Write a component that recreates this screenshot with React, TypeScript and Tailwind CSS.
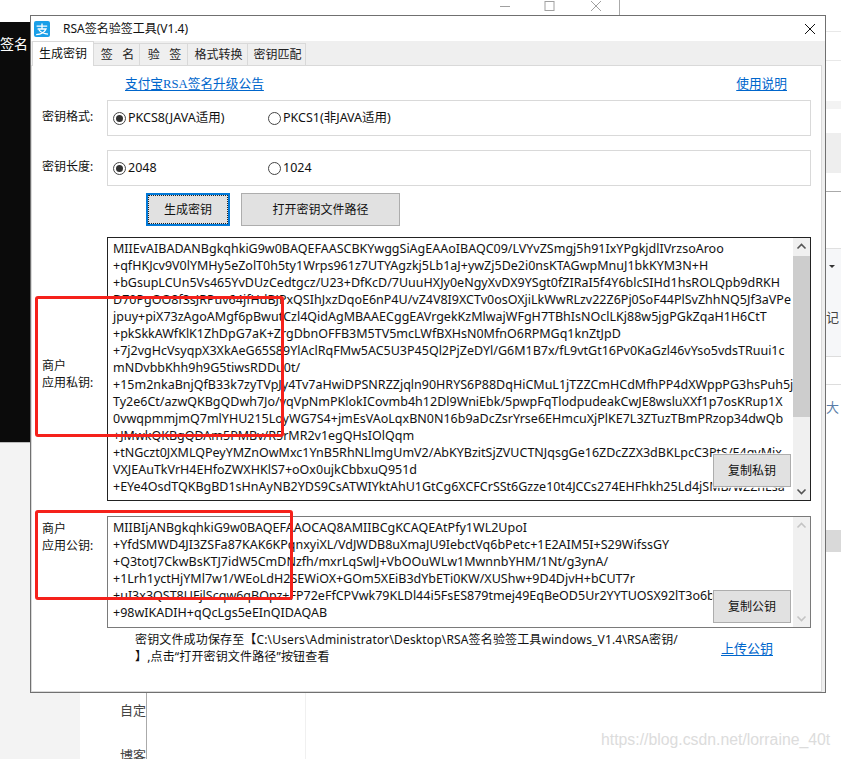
const privateKey = [
  "MIIEvAIBADANBgkqhkiG9w0BAQEFAASCBKYwggSiAgEAAoIBAQC09/LVYvZSmgj5h91IxYPgkjdlIVrzsoAroo",
  "+qfHKJcv9V0lYMHy5eZolT0h5ty1Wrps961z7UTYAgzkj5Lb1aJ+ywZj5De2i0nsKTAGwpMnuJ1bkKYM3N+H",
  "+bGsupLCUn5Vs465YvDUzCedtgcz/U23+DfKcD/7UuuHXJy0eNgyXvDX9YSgt0fZIRaI5f4Y6blcSIHd1hsROLQpb9dRKH",
  "D70PgOO8f3sJRPuv64jfHdBJPxQSIhJxzDqoE6nP4U/vZ4V8I9XCTv0osOXjiLkWwRLzv22Z6Pj0SoF44PlSvZhhNQ5Jf3aVPe",
  "jpuy+piX73zAgoAMgf6pBwutCzl4QidAgMBAAECggEAVrgekKzMlwajWFgH7TBhIsNOclLKj88w5jgPGkZqaH1H6CtT",
  "+pkSkkAWfKlK1ZhDpG7aK+ZrgDbnOFFB3M5TV5mcLWfBXHsN0MfnO6RPMGq1knZtJpD",
  "+7j2vgHcVsyqpX3XkAeG65S89YlAclRqFMw5AC5U3P45Ql2PjZeDYl/G6M1B7x/fL9vtGt16Pv0KaGzl46vYso5vdsTRuui1c",
  "mNDvbbKhh9h9G5tiwsRDDu0t/",
  "+15m2nkaBnjQfB33k7zyTVpJy4Tv7aHwiDPSNRZZjqln90HRYS6P88DqHiCMuL1jTZZCmHCdMfhPP4dXWppPG3hsPuh5j",
  "Ty2e6Ct/azwQKBgQDwh7Jo/vqVpNmPKlokICovmb4h12Dl9WniEbk/5pwpFqTlodpudeakCwJE8wsluXXf1p7osKRup1X",
  "0vwqpmmjmQ7mlYHU215LoyWG7S4+jmEsVAoLqxBN0N16b9aDcZsrYrse6EHmcuXjPlKE7L3ZTuzTBmPRzop34dwQb",
  "+JMwkQKBgQDAm5PMBv/R5rMR2v1egQHsIOlQqm",
  "+tNGczt0JXMLQPeyYMZnOwMxc1YnB5RhNLlmgUmV2/AbKYBzitSjZVUCTNJqsgGe16ZDcZZX3dBKLpcC3PtS/E4qvMix",
  "VXJEAuTkVrH4EHfoZWXHKlS7+oOx0ujkCbbxuQ951d",
  "+EYe4OsdTQKBgBD1sHnAyNB2YDS9CsATWIYktAhU1GtCg6XCFCrSSt6Gzze10t4JCCs274EHFhkh25Ld4jSMB/wZZnLsa",
];

const publicKey = [
  "MIIBIjANBgkqhkiG9w0BAQEFAAOCAQ8AMIIBCgKCAQEAtPfy1WL2UpoI",
  "+YfdSMWD4JI3ZSFa87KAK6KPqnxyiXL/VdJWDB8uXmaJU9IebctVq6bPetc+1E2AIM5I+S29WifssGY",
  "+Q3totJ7CkwBsKTJ7idW5CmDNzfh/mxrLqSwlJ+VbOOuWLw1MwnnbYHM/1Nt/g3ynA/",
  "+1Lrh1yctHjYMl7w1/WEoLdH2SEWiOX+GOm5XEiB3dYbETi0KW/XUShw+9D4DjvH+bCUT7r",
  "+uI3x3QST8UFjlScqw6qBOpz+FP72eFfCPVwk79KLDl44i5FsES879tmej49EqBeOD5Ur2YYTUOSX92lT3o6bs",
  "+98wIKADIH+qQcLgs5eEInQIDAQAB",
];

const tabs = [
  { label: "签   名", width: "w-[46px]" },
  { label: "验   签", width: "w-[48px]" },
  { label: "格式转换", width: "w-[60px]" },
  { label: "密钥匹配", width: "w-[58px]" },
];

const ui = "font-['Noto_Sans','Noto_Sans_CJK_SC',sans-serif]";
const cjk = "font-['Noto_Sans_CJK_SC',sans-serif]";

function Radio({ checked, label, width }: { checked?: boolean; label: string; width: string }) {
  return (
    <label className={`flex items-center gap-[2px] text-[12.5px] text-[#111] ${width}`}>
      <span className="flex h-[13px] w-[13px] items-center justify-center rounded-full border border-[#444] bg-white">
        {checked && <span className="h-[7px] w-[7px] rounded-full bg-[#333]" />}
      </span>
      {label}
    </label>
  );
}

function OptionRow({ title, children }: { title: string; children: React.ReactNode }) {
  return (
    <div className="flex h-9 items-start pr-[10px]">
      <span className="w-[75px] pl-[10px] pt-[8px] text-xs leading-[17px] text-[#111]">{title}</span>
      <div className="flex h-9 min-w-0 flex-1 items-center border border-[#d9d9d9] pl-[5px] pt-px">{children}</div>
    </div>
  );
}

function GrayButton({ label, className }: { label: string; className: string }) {
  return (
    <button className={`flex items-center justify-center border border-[#adadad] bg-[#e1e1e1] text-xs text-[#111] ${className}`}>
      {label}
    </button>
  );
}

function ScrollBar({ disabled, children }: { disabled?: boolean; children?: React.ReactNode }) {
  const color = disabled ? "#c4c4c4" : "#555";
  return (
    <div className="flex w-[17px] shrink-0 flex-col bg-[#f0f0f0]">
      <svg viewBox="0 0 17 17" className="h-[17px] w-[17px] shrink-0">
        <path d="M4.5 10.5 8.5 6.5 12.5 10.5" fill="none" stroke={color} strokeWidth="1.6" />
      </svg>
      <div className="flex-1">{children}</div>
      <svg viewBox="0 0 17 17" className="h-[17px] w-[17px] shrink-0">
        <path d="M4.5 6.5 8.5 10.5 12.5 6.5" fill="none" stroke={color} strokeWidth="1.6" />
      </svg>
    </div>
  );
}

function KeyBlock({
  title,
  lines,
  button,
  boxClass,
  titleClass,
  buttonClass,
  disabled,
}: {
  title: string;
  lines: string[];
  button: string;
  boxClass: string;
  titleClass: string;
  buttonClass: string;
  disabled?: boolean;
}) {
  return (
    <div className="flex items-start pr-[10px]">
      <div className={`w-[75px] shrink-0 pl-[10px] text-xs leading-[17px] text-[#111] ${titleClass}`}>
        商户
        <br />
        {title}
      </div>
      <div className={`relative flex min-w-0 flex-1 overflow-hidden border ${boxClass}`}>
        <div className="min-w-0 flex-1 overflow-hidden whitespace-pre pl-[5px] pt-[2px] text-[12.5px] leading-[17px] text-[#111]">
          {lines.map((line) => (
            <div key={line}>{line}</div>
          ))}
        </div>
        <ScrollBar disabled={disabled}>
          {!disabled && <div className="mt-px h-[161px] bg-[#cdcdcd]" />}
        </ScrollBar>
        <GrayButton label={button} className={`absolute right-[19px] h-[33px] w-[78px] ring-1 ring-white/80 ${buttonClass}`} />
      </div>
    </div>
  );
}

export default function App() {
  return (
    <div className={`relative h-[759px] w-[841px] overflow-hidden bg-white ${cjk}`}>
      {/* window behind the dialog */}
      <div className="absolute left-0 top-[22px] h-[420px] w-[30px] bg-[#0b0b0b]">
        <span className="absolute left-0 top-[11px] whitespace-nowrap text-[14px] leading-5 text-white">签名</span>
      </div>
      <div className="absolute bottom-0 left-0 top-[442px] w-[30px] border-t border-[#bbb] bg-[#f3f3f3]" />
      <div className="absolute bottom-0 left-[30px] top-[692px] w-[50px] bg-[#f3f3f3]" />
      <div className="absolute bottom-0 left-[146px] top-[692px] w-px bg-[#aaa]" />
      <div className="absolute bottom-0 left-[305px] top-[692px] w-px bg-[#f0f0f0]" />
      <div className="absolute left-[120px] top-[700px] whitespace-nowrap text-[13px] leading-5 text-[#444]">自定</div>
      <div className="absolute left-[120px] top-[739px] h-[20px] whitespace-nowrap pt-[6px] text-[13px] leading-5 text-[#444]">博客</div>

      <svg viewBox="0 0 120 14" className="absolute left-[497px] top-0 h-[14px] w-[120px]">
        <path d="M3 6.5H13" stroke="#a0a0a0" strokeWidth="1" />
        <rect x="48" y="1.5" width="9" height="9" fill="none" stroke="#a0a0a0" />
        <path d="M94 1 104 11M104 1 94 11" stroke="#a0a0a0" strokeWidth="1" />
      </svg>
      <div className="absolute left-[619px] top-0 h-[15px] w-px bg-[#aaa]" />

      <div className="absolute left-[826px] top-[31px] h-px w-[15px] bg-[#e8e8e8]" />
      <div className="absolute left-[826px] top-[60px] h-px w-[15px] bg-[#e8e8e8]" />
      <div className="absolute left-[826px] top-[101px] h-[8px] w-[15px] bg-[#f3f3f3]" />
      <div className="absolute left-[826px] top-[133px] h-[40px] w-[15px] bg-[#eeeeee]" />
      <div className="absolute left-[826px] top-[191px] h-px w-[15px] bg-[#aaa]" />
      <div className="absolute left-[826px] top-[248px] h-[108px] w-[15px] overflow-hidden border-t border-[#e0e0e0] bg-[#f6f7f9]">
        <span className="absolute left-[3px] top-[16px] h-0 w-0 border-x-[3px] border-t-[3px] border-x-transparent border-t-[#333]" />
        <span className="absolute left-0 top-[58px] whitespace-nowrap text-[13px] leading-5 text-[#444]">记</span>
      </div>
      <div className="absolute left-[826px] top-[356px] h-px w-[15px] bg-[#ddd]" />
      <div className="absolute left-[826px] top-[384px] h-px w-[15px] bg-[#ddd]" />
      <span className="absolute left-[826px] top-[397px] whitespace-nowrap text-[13px] leading-5 text-[#5a7da8]">大</span>
      <div className="absolute left-[826px] top-[530px] h-[22px] w-[15px] bg-[#d9d9d9]" />

      {/* dialog */}
      <div className={`absolute left-[30px] top-[15px] flex h-[678px] w-[796px] flex-col border border-[#707070] bg-white ${ui}`}>
        <div className="flex h-[25px] shrink-0 items-center pl-[3px] pr-[9px]">
          <svg viewBox="0 0 16 16" className="h-4 w-4 shrink-0">
            <rect width="16" height="16" rx="2" fill="#1a9fe8" />
            <path d="M2.6 5.2H13.2M8 2.6V8M3.6 8H12C10.6 11.2 7.4 13.2 2.2 13.7M5 9.2C7 11.6 10 12.8 14 13.2" fill="none" stroke="#fff" strokeWidth="1.3" />
          </svg>
          <span className="ml-[13px] flex-1 pt-px text-xs text-[#111]">RSA签名验签工具(V1.4)</span>
          <svg viewBox="0 0 12 12" className="h-3 w-3">
            <path d="M1 1 11 11M11 1 1 11" stroke="#111" strokeWidth="1" />
          </svg>
        </div>

        <div className="relative z-10 flex h-[24px] shrink-0 items-end bg-[#efefef] pl-px">
          <div className="relative top-px flex h-[25px] w-[62px] items-center justify-center border-x border-t border-[#d9d9d9] bg-white text-xs text-[#111]">
            生成密钥
          </div>
          {tabs.map((tab) => (
            <div
              key={tab.label}
              className={`flex h-[22px] items-center justify-center whitespace-pre border-r border-t border-[#d9d9d9] pl-[2px] text-xs text-[#222] ${tab.width}`}
            >
              {tab.label}
            </div>
          ))}
        </div>

        <div className="flex min-h-0 flex-1 bg-[#efefef] pr-[3px]">
          <div className="flex min-w-0 flex-1 flex-col border border-[#d9d9d9] bg-white">
            <div className="flex h-[34px] shrink-0 items-start pl-[93px] pr-[34px] pt-[7px] text-[12.7px] leading-[20px] text-[#0066cc]">
              <a className="flex-1 underline underline-offset-2">
                <span className="font-['Liberation_Serif','Noto_Sans_CJK_SC',serif]">支付宝RSA签名升级公告</span>
              </a>
              <a className="underline underline-offset-2">使用说明</a>
            </div>

            <OptionRow title="密钥格式:">
              <Radio checked label="PKCS8(JAVA适用)" width="w-[155px]" />
              <Radio label="PKCS1(非JAVA适用)" width="w-[180px]" />
            </OptionRow>

            <div className="mt-[14px]">
              <OptionRow title="密钥长度:">
                <Radio checked label="2048" width="w-[155px]" />
                <Radio label="1024" width="w-[100px]" />
              </OptionRow>
            </div>

            <div className="mt-[7px] flex h-[33px] shrink-0 gap-[11px] pl-[114px]">
              <button className="flex w-[84px] items-center justify-center border-2 border-[#0078d7] bg-[#e1e1e1] text-xs text-[#111] outline-1 -outline-offset-3 outline-dotted outline-[#222]">
                生成密钥
              </button>
              <GrayButton label="打开密钥文件路径" className="w-[159px]" />
            </div>

            <div className="mt-[11px]">
              <KeyBlock
                title="应用私钥:"
                lines={privateKey}
                button="复制私钥"
                boxClass="h-[264px] border-[#222]"
                titleClass="pt-[120px]"
                buttonClass="bottom-[13px]"
              />
            </div>

            <div className="mt-[15px]">
              <KeyBlock
                title="应用公钥:"
                lines={publicKey}
                button="复制公钥"
                boxClass="h-[112px] border-[#7a7a7a]"
                titleClass="pt-[4px]"
                buttonClass="bottom-[4px]"
                disabled
              />
            </div>

            <div className="mt-[3px] flex pl-[103px] pr-[48px]">
              <p className="w-[586px] text-xs leading-[17px] tracking-[0.15px] text-[#111]">
                密钥文件成功保存至【C:\Users\Administrator\Desktop\RSA签名验签工具windows_V1.4\RSA密钥/
                <br />】,点击“打开密钥文件路径”按钮查看
              </p>
              <a className="pt-[9px] text-[13px] leading-[17px] text-[#0066cc] underline underline-offset-2">上传公钥</a>
            </div>
          </div>
        </div>
      </div>

      {/* annotations */}
      <div className="absolute left-[35px] top-[296px] h-[141px] w-[249px] rounded-[3px] border-[3px] border-[#f5211b]" />
      <div className="absolute left-[35px] top-[510px] h-[90px] w-[258px] rounded-[3px] border-[3px] border-[#f5211b]" />

      <span className="absolute left-[601px] top-[730px] whitespace-nowrap font-['Liberation_Sans',sans-serif] text-[15.8px] leading-5 text-[#dcdcdc]">
        https://blog.csdn.net/lorraine_40t
      </span>
    </div>
  );
}
